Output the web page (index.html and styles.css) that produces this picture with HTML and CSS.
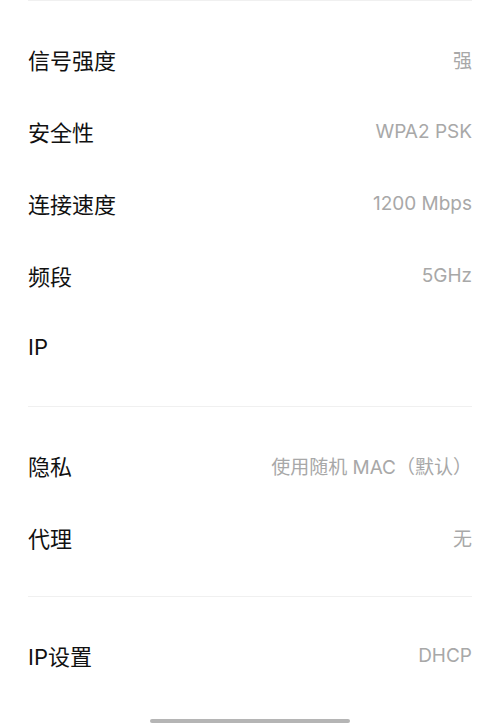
FILE: index.html
```html
<!DOCTYPE html>
<html lang="zh-CN">

<head>
    <meta charset="UTF-8">
    <meta name="viewport" content="width=device-width, initial-scale=1.0">
    <title>WLAN 详情</title>
    <link rel="stylesheet" href="styles.css">
</head>

<body>
    <div class="divider"></div>
    <section class="group">
        <div class="row"><span class="label">信号强度</span><span class="value">强</span></div>
        <div class="row"><span class="label">安全性</span><span class="value">WPA2 PSK</span></div>
        <div class="row"><span class="label">连接速度</span><span class="value">1200 Mbps</span></div>
        <div class="row"><span class="label">频段</span><span class="value">5GHz</span></div>
        <div class="row"><span class="label">IP</span><span class="value"></span></div>
    </section>
    <div class="divider"></div>
    <section class="group">
        <div class="row"><span class="label">隐私</span><span class="value">使用随机 MAC（默认）</span></div>
        <div class="row"><span class="label">代理</span><span class="value">无</span></div>
    </section>
    <div class="divider"></div>
    <section class="group">
        <div class="row"><span class="label">IP设置</span><span class="value">DHCP</span></div>
    </section>

    <div class="home-bar"></div>
</body>

</html>
```

FILE: styles.css
```css
body {
    margin: 0;
    background: #ffffff;
    font-family: Inter, "Noto Sans CJK SC", sans-serif;
}

.divider {
    height: 1px;
    margin: 0 28px;
    background: #f0f0f0;
}

.group {
    padding: 22px 28px 23px 28px;
}

.row {
    height: 72px;
    display: flex;
    align-items: center;
    justify-content: space-between;
}

.label {
    font-size: 22px;
    color: #111111;
}

.value {
    font-size: 19px;
    color: #a8a8a8;
}

.home-bar {
    position: fixed;
    left: 150px;
    bottom: 2px;
    width: 200px;
    height: 4px;
    border-radius: 2px;
    background: #b5b5b5;
}
```
